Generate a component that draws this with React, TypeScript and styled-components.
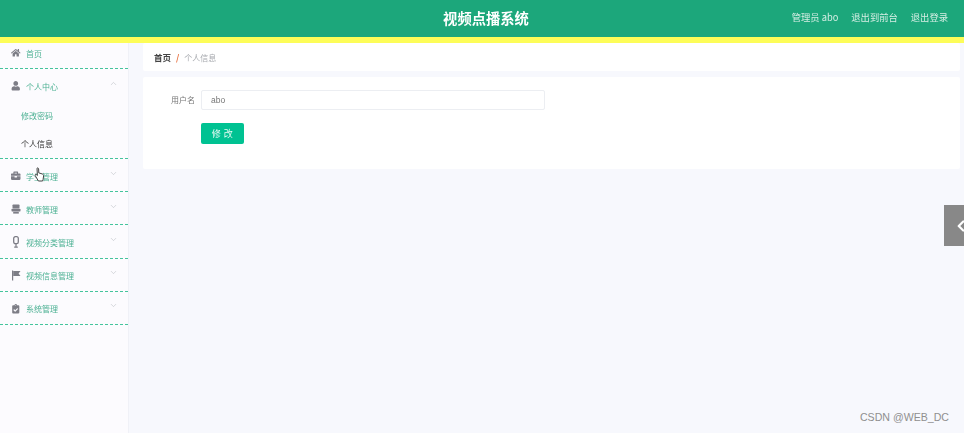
import React from "react";
import styled, { createGlobalStyle } from "styled-components";
import { ChevronDown, ChevronLeft, ChevronUp } from "lucide-react";
import { FaBriefcase, FaClipboardCheck, FaHome, FaUser } from "react-icons/fa";

const GlobalStyle = createGlobalStyle`
  html, body {
    margin: 0;
    height: 100%;
    overflow: hidden;
    background: #f7f8fd;
    font-family: "Noto Sans CJK SC", "Liberation Sans", sans-serif;
  }
`;

const Page = styled.div`
  position: relative;
  width: 964px;
  height: 433px;
  overflow: hidden;
  display: flex;
  flex-direction: column;
  background: #f7f8fd;
`;

const Blurred = styled.div`
  display: flex;
  flex-direction: column;
  flex: 1;
  min-height: 0;
  filter: blur(0.5px);
`;

const Header = styled.header`
  flex-shrink: 0;
  height: 34px;
  display: grid;
  grid-template-columns: 1fr auto 1fr;
  align-items: center;
  padding: 0 16px 3px 24px;
  background: #1ca77b;
  border-bottom: 6px solid #fdfd58;
`;

const Title = styled.h1`
  grid-column: 2;
  margin: 0;
  font-size: 14.3px;
  font-weight: 700;
  color: #fff;
`;

const HeaderLinks = styled.div`
  grid-column: 3;
  justify-self: end;
  display: flex;
  gap: 13px;
  font-size: 9.3px;
  color: #d5eee4;
`;

const Body = styled.div`
  flex: 1;
  display: flex;
  min-height: 0;
`;

const Sidebar = styled.nav`
  width: 128px;
  flex-shrink: 0;
  background: #fcfbfe;
  border-right: 1px solid #f0f1f7;
`;

const MenuGroup = styled.div`
  border-bottom: 1px dashed #45c49c;
`;

const MenuRow = styled.div<{ $home?: boolean }>`
  height: ${(p) => (p.$home ? "25px" : "32.2px")};
  padding: ${(p) => (p.$home ? "0 0 5px 11px" : "2px 0 0 11px")};
  box-sizing: border-box;
  display: flex;
  align-items: center;
  gap: 5px;
  font-size: 8px;
  color: #4cb193;
`;

const MenuIcon = styled.span`
  width: 10px;
  display: flex;
  justify-content: center;
  font-size: 9.5px;
  color: #7d7d86;
`;

const Arrow = styled.span`
  margin-left: auto;
  margin-right: 10px;
  margin-top: -6px;
  display: flex;
  color: #b5b8bd;
`;

const SubItem = styled.div<{ $active?: boolean }>`
  height: 28.4px;
  padding-left: 21px;
  display: flex;
  align-items: center;
  font-size: 8px;
  color: ${(p) => (p.$active ? "#333" : "#4cb193")};
`;

const Main = styled.main`
  flex: 1;
  min-width: 0;
  padding: 0 4px 0 14px;
  display: flex;
  flex-direction: column;
  gap: 6px;
`;

const Crumbs = styled.div`
  height: 28px;
  padding-left: 11px;
  display: flex;
  align-items: center;
  background: #fff;
  border-radius: 2px;
  font-size: 8.5px;
`;

const CrumbHome = styled.span`
  font-weight: 700;
  color: #444;
`;

const CrumbSlash = styled.span`
  margin: 0 5px;
  color: #e8703f;
  font-weight: 700;
`;

const CrumbCurrent = styled.span`
  font-size: 8px;
  color: #a5a8ad;
`;

const FormCard = styled.section`
  height: 92px;
  padding-top: 13px;
  box-sizing: border-box;
  background: #fff;
  border-radius: 2px;
  display: grid;
  grid-template-columns: 52px 344px;
  grid-auto-rows: min-content;
  column-gap: 6px;
  row-gap: 13px;
  align-items: center;
`;

const Label = styled.label`
  justify-self: end;
  padding-bottom: 2px;
  font-size: 8px;
  color: #777;
`;

const TextField = styled.input`
  height: 20px;
  width: 100%;
  box-sizing: border-box;
  padding: 0 9px;
  border: 1px solid #eceef2;
  border-radius: 2px;
  outline: none;
  background: #fff;
  color: #777;
  font-family: "Liberation Sans", sans-serif;
  font-size: 8.5px;
`;

const SubmitButton = styled.button`
  grid-column: 2;
  width: 43px;
  height: 21px;
  padding: 0;
  border: none;
  border-radius: 2px;
  background: #00c292;
  color: #e6fbf4;
  font-family: inherit;
  font-size: 9px;
  letter-spacing: 0.5px;
`;

const SideToggle = styled.div`
  position: absolute;
  right: 0;
  top: 205px;
  width: 20px;
  height: 41px;
  display: flex;
  align-items: center;
  padding-left: 8px;
  box-sizing: border-box;
  overflow: hidden;
  background: #888;
  color: #fff;

  svg {
    flex-shrink: 0;
  }
`;

const Watermark = styled.div`
  position: absolute;
  right: 15px;
  top: 411px;
  font-family: "Liberation Sans", sans-serif;
  font-size: 10.6px;
  color: #8f8f8f;
`;

const Cursor = styled.svg`
  position: absolute;
  left: 34px;
  top: 167px;
`;

const PrinterIcon = () => (
  <svg width="10" height="10" viewBox="0 0 10 10" fill="currentColor">
    <rect x="1.5" y="0.5" width="7" height="4" rx="0.8" />
    <rect x="0.5" y="4.8" width="9" height="2.6" rx="0.6" />
    <rect x="2.2" y="7.8" width="5.6" height="1.8" />
  </svg>
);

const MicIcon = () => (
  <svg width="10" height="12" viewBox="0 0 10 12" fill="none" stroke="currentColor">
    <rect x="2.7" y="0.7" width="4.6" height="7" rx="1.6" strokeWidth="1.3" />
    <path d="M5 8v3M3.2 11.2h3.6" strokeWidth="1.2" />
  </svg>
);

const FlagIcon = () => (
  <svg width="10" height="11" viewBox="0 0 10 11" fill="currentColor">
    <rect x="1" y="0.5" width="1.2" height="10" />
    <path d="M2.2 1h7.3L7.6 3.4 9.5 6H2.2z" />
  </svg>
);

const menus = [
  { label: "学生管理", icon: <FaBriefcase /> },
  { label: "教师管理", icon: <PrinterIcon /> },
  { label: "视频分类管理", icon: <MicIcon /> },
  { label: "视频信息管理", icon: <FlagIcon /> },
  { label: "系统管理", icon: <FaClipboardCheck /> },
];

export default function App() {
  return (
    <Page>
      <GlobalStyle />
      <Blurred>
        <Header>
          <Title>视频点播系统</Title>
          <HeaderLinks>
            <span>管理员 abo</span>
            <span>退出到前台</span>
            <span>退出登录</span>
          </HeaderLinks>
        </Header>
        <Body>
          <Sidebar>
            <MenuGroup>
              <MenuRow $home>
                <MenuIcon><FaHome /></MenuIcon>
                首页
              </MenuRow>
            </MenuGroup>
            <MenuGroup>
              <MenuRow>
                <MenuIcon><FaUser /></MenuIcon>
                个人中心
                <Arrow><ChevronUp size={9} strokeWidth={1.4} /></Arrow>
              </MenuRow>
              <SubItem>修改密码</SubItem>
              <SubItem $active>个人信息</SubItem>
            </MenuGroup>
            {menus.map((m) => (
              <MenuGroup key={m.label}>
                <MenuRow>
                  <MenuIcon>{m.icon}</MenuIcon>
                  {m.label}
                  <Arrow><ChevronDown size={9} strokeWidth={1.4} /></Arrow>
                </MenuRow>
              </MenuGroup>
            ))}
          </Sidebar>
          <Main>
            <Crumbs>
              <CrumbHome>首页</CrumbHome>
              <CrumbSlash>/</CrumbSlash>
              <CrumbCurrent>个人信息</CrumbCurrent>
            </Crumbs>
            <FormCard>
              <Label htmlFor="username">用户名</Label>
              <TextField id="username" defaultValue="abo" />
              <SubmitButton>修 改</SubmitButton>
            </FormCard>
          </Main>
        </Body>
        <Cursor width="11" height="15" viewBox="0 0 11 15">
          <path
            d="M3 1.2c.7-.6 1.5-.2 1.6.7l.2 4 3.3 1c1 .3 1.6 1 1.5 2l-.5 3.5-.5 1.6H4.4L1.2 8.6c-.5-.8.4-1.6 1.2-1l1 .9L3 1.2z"
            fill="#fff"
            stroke="#444"
            strokeWidth="1"
          />
        </Cursor>
        <SideToggle><ChevronLeft size={18} strokeWidth={3} /></SideToggle>
      </Blurred>
      <Watermark>CSDN @WEB_DC</Watermark>
    </Page>
  );
}
